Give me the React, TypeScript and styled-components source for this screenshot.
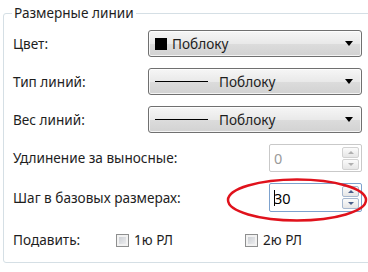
import styled, { createGlobalStyle } from "styled-components";

const GlobalStyle = createGlobalStyle`
  html, body {
    margin: 0;
    background: #ffffff;
  }
  body {
    width: 368px;
    height: 272px;
    overflow: hidden;
    font-family: "Noto Sans", "Open Sans", sans-serif;
    font-size: 13.6px;
    color: #1e1e1e;
  }
`;

const Page = styled.div`
  position: relative;
  width: 368px;
  height: 272px;
  padding-top: 5px;
  box-sizing: border-box;
`;

const Group = styled.fieldset`
  box-sizing: border-box;
  width: 380px;
  height: 258px;
  margin: 0 0 0 3px;
  padding: 9px 0 0 9px;
  border: 1px solid #d5dfe5;
  border-radius: 3px;
`;

const Legend = styled.legend`
  padding: 0 2px;
  margin-left: -1px;
  line-height: 16px;
  color: #1e1e1e;
`;

const Form = styled.div`
  display: flex;
  flex-direction: column;
  gap: 11px;
`;

const Row = styled.div<{ $h: number }>`
  display: grid;
  grid-template-columns: 135px 214px;
  align-items: center;
  height: ${({ $h }) => $h}px;
`;

const Label = styled.span`
  white-space: nowrap;
  line-height: 16px;
`;

const Select = styled.div`
  box-sizing: border-box;
  height: 100%;
  display: flex;
  align-items: center;
  padding: 0 8px 0 6px;
  border: 1px solid #707070;
  border-radius: 3px;
  background: linear-gradient(#f6f6f6 0%, #e9e9e9 50%, #dcdcdc 51%, #d2d2d2 100%);
  box-shadow: inset 0 0 0 1px rgba(255, 255, 255, 0.75);
`;

const Swatch = styled.span`
  width: 12px;
  height: 12px;
  background: #000;
  margin-right: 5px;
`;

const LineSample = styled.span`
  width: 53px;
  height: 1px;
  background: #000;
  margin-right: 11px;
`;

const Arrow = styled.span`
  margin-left: auto;
  width: 0;
  height: 0;
  border-left: 4px solid transparent;
  border-right: 4px solid transparent;
  border-top: 5px solid #000;
`;

const Spinner = styled.div<{ $active?: boolean }>`
  grid-column: 2;
  justify-self: end;
  box-sizing: border-box;
  width: 93px;
  height: 100%;
  display: flex;
  align-items: center;
  padding: 0 2px 0 4px;
  background: #fff;
  border: 1px solid ${({ $active }) => ($active ? "#7da2ce" : "#c9c9c9")};
  border-radius: 2px;
  color: ${({ $active }) => ($active ? "#000" : "#9a9a9a")};
  font-size: 14.5px;
`;

const Caret = styled.span`
  width: 1px;
  height: 16px;
  background: #000;
  margin-right: -1px;
`;

const SpinButtons = styled.div`
  margin-left: auto;
  display: flex;
  flex-direction: column;
  gap: 1px;
`;

const SpinButton = styled.div<{ $active?: boolean }>`
  box-sizing: border-box;
  width: 17px;
  height: 11px;
  display: flex;
  align-items: center;
  justify-content: center;
  border: 1px solid ${({ $active }) => ($active ? "#a7b8cf" : "#d2d2d2")};
  border-radius: 2px;
  background: linear-gradient(#fbfbfb, #e6e6e6);
`;

const SpinArrow = styled.span<{ $up?: boolean; $active?: boolean }>`
  width: 0;
  height: 0;
  border-left: 3px solid transparent;
  border-right: 3px solid transparent;
  ${({ $up, $active }) =>
    `${$up ? "border-bottom" : "border-top"}: 3px solid ${
      $active ? "#4a5f8a" : "#b0b0b0"
    };`}
`;

const CheckRow = styled.div`
  display: flex;
  align-items: center;
  height: 16px;
  margin-top: 9px;
`;

const CheckLabel = styled(Label)<{ $w: number }>`
  width: ${({ $w }) => $w}px;
`;

const CheckItem = styled.label<{ $w: number }>`
  display: flex;
  align-items: center;
  gap: 5px;
  width: ${({ $w }) => $w}px;
  line-height: 16px;
`;

const Box = styled.span`
  box-sizing: border-box;
  width: 13px;
  height: 13px;
  border: 1px solid #8e8f8f;
  background: linear-gradient(135deg, #c4c8ce, #f4f4f5);
  box-shadow: inset 0 0 0 2px #f2f2f2;
`;

const Annotation = styled.svg`
  position: absolute;
  left: 222px;
  top: 175px;
  overflow: visible;
`;

const Dropdown = ({ swatch }: { swatch?: boolean }) => (
  <Select>
    {swatch ? <Swatch /> : <LineSample />}
    <span>Поблоку</span>
    <Arrow />
  </Select>
);

const NumberField = ({ value, active }: { value: string; active?: boolean }) => (
  <Spinner $active={active}>
    {active && <Caret />}
    <span>{value}</span>
    <SpinButtons>
      <SpinButton $active={active}>
        <SpinArrow $up $active={active} />
      </SpinButton>
      <SpinButton $active={active}>
        <SpinArrow $active={active} />
      </SpinButton>
    </SpinButtons>
  </Spinner>
);

export default function App() {
  return (
    <Page>
      <GlobalStyle />
      <Group>
        <Legend>Размерные линии</Legend>
        <Form>
          <Row $h={27}>
            <Label>Цвет:</Label>
            <Dropdown swatch />
          </Row>
          <Row $h={27}>
            <Label>Тип линий:</Label>
            <Dropdown />
          </Row>
          <Row $h={27}>
            <Label>Вес линий:</Label>
            <Dropdown />
          </Row>
          <Row $h={28}>
            <Label>Удлинение за выносные:</Label>
            <NumberField value="0" />
          </Row>
          <Row $h={29}>
            <Label>Шаг в базовых размерах:</Label>
            <NumberField value="30" active />
          </Row>
          <CheckRow>
            <CheckLabel $w={103}>Подавить:</CheckLabel>
            <CheckItem $w={129}>
              <Box />
              1ю РЛ
            </CheckItem>
            <CheckItem $w={120}>
              <Box />
              2ю РЛ
            </CheckItem>
          </CheckRow>
        </Form>
      </Group>
      <Annotation width="150" height="52" viewBox="0 0 150 52">
        <ellipse
          cx="75"
          cy="25"
          rx="69"
          ry="20.5"
          fill="none"
          stroke="#e0121c"
          strokeWidth="2.5"
        />
      </Annotation>
    </Page>
  );
}
